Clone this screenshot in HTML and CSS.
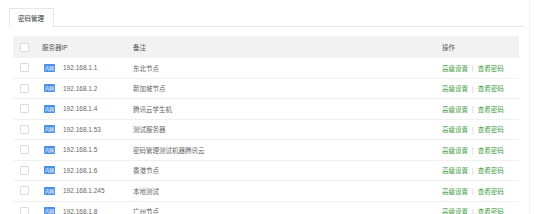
FILE: index.html
```html
<!DOCTYPE html>
<html lang="zh-CN">
<head>
<meta charset="utf-8">
<title>密码管理</title>
<link rel="stylesheet" href="styles.css">
</head>
<body>
<div class="page">
  <div class="tabs">
    <div class="tab">密码管理</div>
  </div>
  <div class="table">
    <div class="row head">
      <div class="cell"><span class="cb"></span></div>
      <div class="cell">服务器IP</div>
      <div class="cell">备注</div>
      <div class="cell">操作</div>
    </div>
    <div class="row">
      <div class="cell"><span class="cb"></span></div>
      <div class="cell"><span class="badge">内网</span>192.168.1.1</div>
      <div class="cell">东北节点</div>
      <div class="cell"><a class="link">高级设置</a><span class="sep">|</span><a class="link">查看密码</a></div>
    </div>
    <div class="row">
      <div class="cell"><span class="cb"></span></div>
      <div class="cell"><span class="badge">内网</span>192.168.1.2</div>
      <div class="cell">新加坡节点</div>
      <div class="cell"><a class="link">高级设置</a><span class="sep">|</span><a class="link">查看密码</a></div>
    </div>
    <div class="row">
      <div class="cell"><span class="cb"></span></div>
      <div class="cell"><span class="badge">内网</span>192.168.1.4</div>
      <div class="cell">腾讯云学生机</div>
      <div class="cell"><a class="link">高级设置</a><span class="sep">|</span><a class="link">查看密码</a></div>
    </div>
    <div class="row">
      <div class="cell"><span class="cb"></span></div>
      <div class="cell"><span class="badge">内网</span>192.168.1.53</div>
      <div class="cell">测试服务器</div>
      <div class="cell"><a class="link">高级设置</a><span class="sep">|</span><a class="link">查看密码</a></div>
    </div>
    <div class="row">
      <div class="cell"><span class="cb"></span></div>
      <div class="cell"><span class="badge">内网</span>192.168.1.5</div>
      <div class="cell">密码管理测试机器腾讯云</div>
      <div class="cell"><a class="link">高级设置</a><span class="sep">|</span><a class="link">查看密码</a></div>
    </div>
    <div class="row">
      <div class="cell"><span class="cb"></span></div>
      <div class="cell"><span class="badge">内网</span>192.168.1.6</div>
      <div class="cell">香港节点</div>
      <div class="cell"><a class="link">高级设置</a><span class="sep">|</span><a class="link">查看密码</a></div>
    </div>
    <div class="row">
      <div class="cell"><span class="cb"></span></div>
      <div class="cell"><span class="badge">内网</span>192.168.1.245</div>
      <div class="cell">本地测试</div>
      <div class="cell"><a class="link">高级设置</a><span class="sep">|</span><a class="link">查看密码</a></div>
    </div>
    <div class="row">
      <div class="cell"><span class="cb"></span></div>
      <div class="cell"><span class="badge">内网</span>192.168.1.8</div>
      <div class="cell">广州节点</div>
      <div class="cell"><a class="link">高级设置</a><span class="sep">|</span><a class="link">查看密码</a></div>
    </div>
  </div>
</div>
</body>
</html>
```
FILE: styles.css
```css
html, body {
  margin: 0;
  padding: 0;
  background: #fff;
}
body {
  font-family: "Liberation Sans", "Noto Sans CJK SC", sans-serif;
  font-size: 6.5px;
  color: #666;
}
.page {
  width: 530px;
  min-height: 214px;
  border-right: 1px solid #f0f0f0;
  box-sizing: border-box;
  padding-top: 8px;
}
.tabs {
  margin-left: 9px;
  width: 515px;
  border-bottom: 1px solid #e6e6e6;
  display: flex;
  height: 18px;
}
.tab {
  border: 1px solid #e6e6e6;
  border-bottom: none;
  background: #fff;
  box-sizing: border-box;
  margin-bottom: -1px;
  padding: 0 9px 0 8px;
  display: flex;
  align-items: center;
  color: #333;
  height: 19px;
}
.table {
  margin: 9px 0 0 13px;
  width: 506px;
}
.row {
  display: grid;
  grid-template-columns: 29px 91px 309px 1fr;
  height: 20.5px;
  box-sizing: border-box;
  border-bottom: 1px solid #f0f0f0;
  align-items: center;
}
.row.head {
  height: 22px;
  background: #f2f2f2;
  border-bottom: none;
  color: #555;
}
.cell {
  display: flex;
  align-items: center;
  white-space: nowrap;
}
.cell:first-child {
  padding-left: 7px;
}
.cb {
  display: inline-block;
  width: 9px;
  height: 9px;
  box-sizing: border-box;
  border: 1px solid #dcdcdc;
  background: #fff;
  border-radius: 1px;
}
.row:not(.head) .cell:nth-child(2) {
  padding-left: 2px;
}
.badge {
  display: inline-flex;
  align-items: center;
  justify-content: center;
  width: 11px;
  height: 8px;
  background: #4a90e2;
  color: #fff;
  font-size: 4.5px;
  margin-right: 8px;
  border-radius: 1px;
}
.link {
  color: #3f9a43;
  text-decoration: none;
}
.sep {
  color: #c8c8c8;
  margin: 0 4px;
}
```
